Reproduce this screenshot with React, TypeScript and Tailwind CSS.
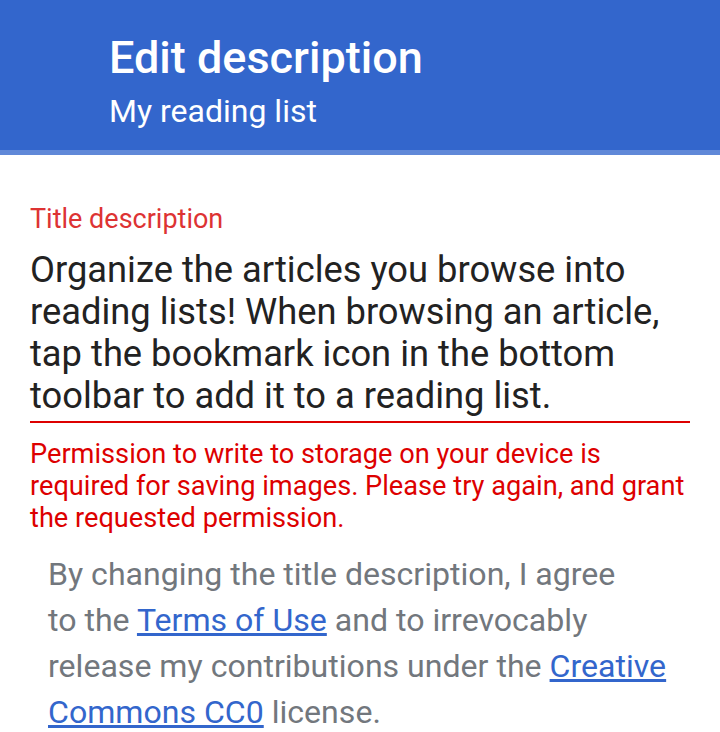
import React from 'react';

const App: React.FC = () => {
  return (
    <div className="w-[720px] h-[732px] bg-white overflow-hidden font-['Roboto',sans-serif]">
      <div className="bg-[#3366cc] h-[150px] pl-[109px] pt-[32px] text-white">
        <div className="text-[45px] font-medium leading-[52px]">Edit description</div>
        <div className="text-[32px] leading-[40px] mt-[7px]">My reading list</div>
      </div>
      <div className="h-[5px] bg-[#6088d8]" />

      <div className="px-[30px] pt-[47px]">
        <div className="text-[27px] leading-[34px] text-[#d33]">Title description</div>
        <div className="mt-[13px] pb-[4px] border-b-2 border-[#d00]">
          <p className="text-[36.3px] leading-[42px] text-[#222] whitespace-nowrap">
            Organize the articles you browse into
            <br />
            reading lists! When browsing an article,
            <br />
            tap the bookmark icon in the bottom
            <br />
            toolbar to add it to a reading list.
          </p>
        </div>
        <p className="mt-[15px] text-[27.2px] leading-[32px] text-[#d00] whitespace-nowrap">
          Permission to write to storage on your device is
          <br />
          required for saving images. Please try again, and grant
          <br />
          the requested permission.
        </p>
        <p className="mt-[17px] pl-[18px] text-[32.1px] leading-[46px] text-[#72777d] whitespace-nowrap">
          By changing the title description, I agree
          <br />
          to the <a className="text-[#3366cc] underline">Terms of Use</a> and to irrevocably
          <br />
          release my contributions under the <a className="text-[#3366cc] underline">Creative</a>
          <br />
          <a className="text-[#3366cc] underline">Commons CC0</a> license.
        </p>
      </div>
    </div>
  );
};

export default App;
